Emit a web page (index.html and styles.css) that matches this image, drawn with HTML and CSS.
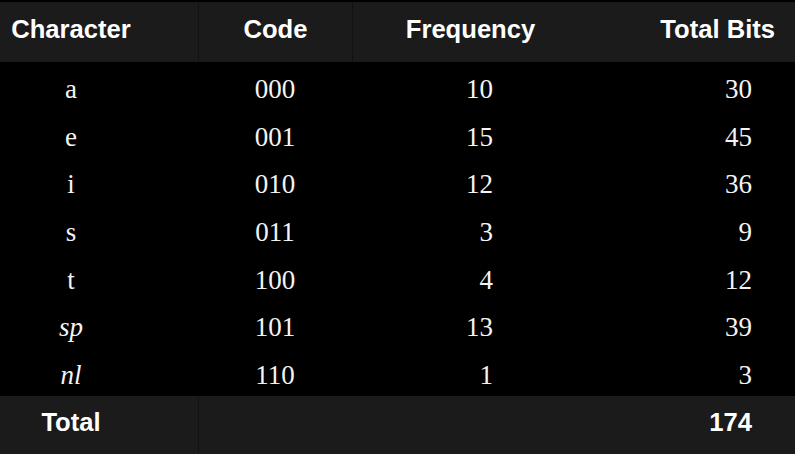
FILE: index.html
```html
<!DOCTYPE html>
<html>
<head>
<meta charset="utf-8">
<link rel="stylesheet" href="styles.css">
</head>
<body>
<div class="table">
  <div class="row head">
    <div class="cell c1">Character</div>
    <div class="cell c2 div">Code</div>
    <div class="cell c3h div">Frequency</div>
    <div class="cell c4h">Total Bits</div>
  </div>
  <div class="body">
    <div class="row">
      <div class="cell c1">a</div><div class="cell c2">000</div><div class="cell c3">10</div><div class="cell c4">30</div>
    </div>
    <div class="row">
      <div class="cell c1">e</div><div class="cell c2">001</div><div class="cell c3">15</div><div class="cell c4">45</div>
    </div>
    <div class="row">
      <div class="cell c1">i</div><div class="cell c2">010</div><div class="cell c3">12</div><div class="cell c4">36</div>
    </div>
    <div class="row">
      <div class="cell c1">s</div><div class="cell c2">011</div><div class="cell c3">3</div><div class="cell c4">9</div>
    </div>
    <div class="row">
      <div class="cell c1">t</div><div class="cell c2">100</div><div class="cell c3">4</div><div class="cell c4">12</div>
    </div>
    <div class="row">
      <div class="cell c1"><i>sp</i></div><div class="cell c2">101</div><div class="cell c3">13</div><div class="cell c4">39</div>
    </div>
    <div class="row">
      <div class="cell c1"><i>nl</i></div><div class="cell c2">110</div><div class="cell c3">1</div><div class="cell c4">3</div>
    </div>
  </div>
  <div class="row foot">
    <div class="cell c1">Total</div>
    <div class="cell span div"></div>
    <div class="cell c4">174</div>
  </div>
</div>
</body>
</html>
```

FILE: styles.css
```css
html, body {
  margin: 0;
  padding: 0;
  background: #000;
}
body {
  padding-top: 2px;
  width: 795px;
  height: 452px;
  overflow: hidden;
}
.table {
  width: 795px;
  color: #fff;
}
.row {
  display: grid;
  grid-template-columns: 198px 154px 236px 207px;
  align-items: stretch;
}
.cell {
  display: flex;
  align-items: center;
  box-sizing: border-box;
  white-space: nowrap;
}
.head, .foot {
  background: #1b1b1b;
  font-family: "Liberation Sans", Arial, sans-serif;
  font-weight: bold;
  font-size: 25.6px;
}
.head {
  height: 60px;
}
.head .cell, .foot .cell {
  padding-bottom: 5px;
}
.foot {
  height: 58px;
  grid-template-columns: 198px 390px 207px;
}
.div {
  border-left: 1px solid #121212;
}
.body .row {
  height: 47.714px;
  font-family: "Liberation Serif", "Times New Roman", serif;
  font-size: 27px;
  color: #f4f4f4;
}
.body .cell {
  padding-top: 7px;
}
.c1 {
  justify-content: center;
  padding-right: 56px;
}
.c2 {
  justify-content: center;
}
.c3h {
  justify-content: center;
}
.c3 {
  justify-content: flex-end;
  padding-right: 95px;
}
.c4h {
  justify-content: flex-end;
  padding-right: 20px;
}
.c4 {
  justify-content: flex-end;
  padding-right: 43px;
}
```
